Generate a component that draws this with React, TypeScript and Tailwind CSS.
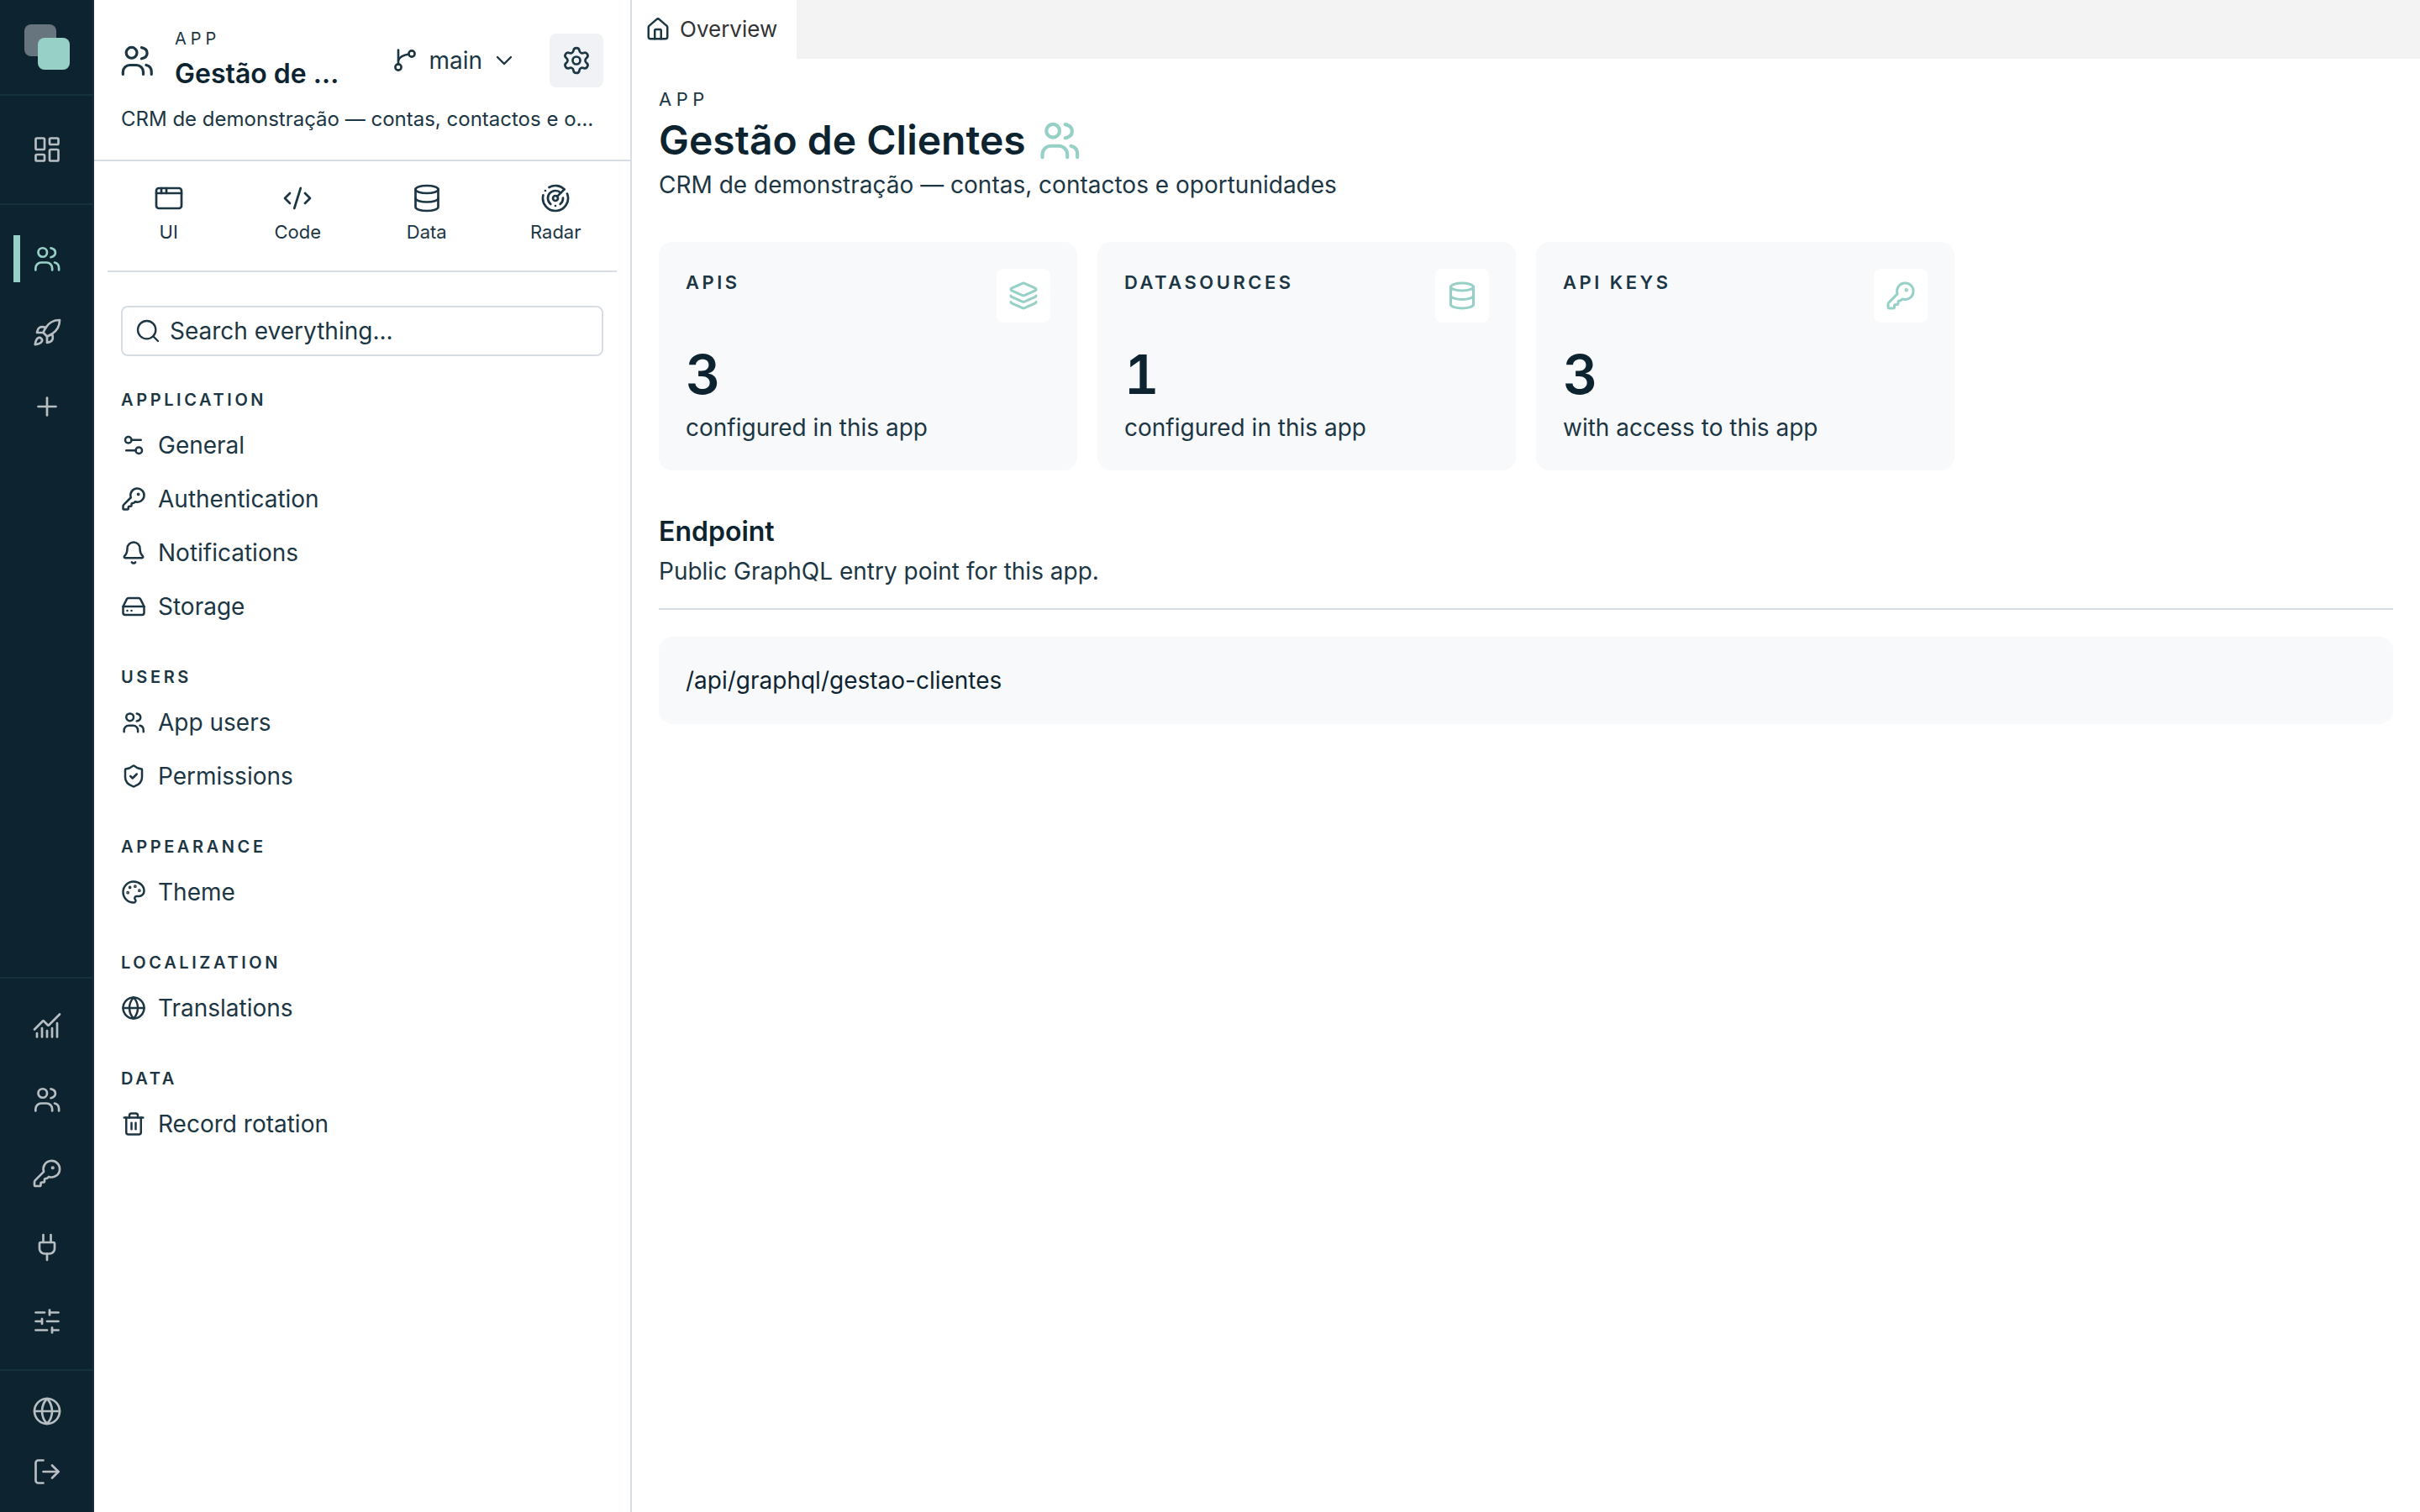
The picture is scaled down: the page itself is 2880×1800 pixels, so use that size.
import React from "react";
import {
  AppWindow,
  Bell,
  ChartNoAxesCombined,
  ChevronDown,
  CodeXml,
  Database,
  Globe,
  HardDrive,
  House,
  KeyRound,
  Layers,
  LayoutDashboard,
  LogOut,
  LucideIcon,
  LucideProps,
  Palette,
  Plug,
  Plus,
  Radar,
  Rocket,
  Search,
  Settings,
  Settings2,
  ShieldCheck,
  SlidersHorizontal,
  Trash2,
} from "lucide-react";

type IconType = LucideIcon | React.FC<LucideProps>;

// the app icon: lucide's Users is too slanted, this one has a round arch body
function AppUsers({ size = 24, strokeWidth = 2, className }: LucideProps) {
  return (
    <svg
      width={size}
      height={size}
      viewBox="0 0 24 24"
      fill="none"
      stroke="currentColor"
      strokeWidth={strokeWidth}
      strokeLinecap="round"
      strokeLinejoin="round"
      className={className}
    >
      <circle cx="8.5" cy="7" r="3.5" />
      <path d="M15 3.6c2.4.5 3.6 2 3.6 3.6s-1.2 3.1-3.6 3.6" />
      <path d="M2.9 21v-1.5a4.5 4.5 0 0 1 4.5-4.5h4.2a4.5 4.5 0 0 1 4.5 4.5V21" />
      <path d="M18 15c2.2.5 3.4 2.2 3.4 4.3V21" />
    </svg>
  );
}

function BranchIcon() {
  return (
    <svg
      width="28"
      height="28"
      viewBox="0 0 28 28"
      fill="none"
      stroke="currentColor"
      strokeWidth="2.6"
      strokeLinecap="round"
    >
      <circle cx="6" cy="22" r="3.6" />
      <circle cx="22" cy="6" r="3.6" />
      <path d="M6 18.4V1.5" />
      <path d="M18.4 6.5C12.5 7.5 7.5 9.5 6 14" />
    </svg>
  );
}

function RailItem({
  icon: Icon,
  active,
  className = "h-[88px]",
}: {
  icon: IconType;
  active?: boolean;
  className?: string;
}) {
  return (
    <div
      className={`relative flex items-center justify-center pl-[2px] ${className}`}
    >
      {active && (
        <span className="absolute left-4 top-4 h-14 w-2 bg-[#96d0c6]" />
      )}
      <Icon
        size={36}
        strokeWidth={1.8}
        className={active ? "text-[#96d0c6]" : "text-[#b7bec2]"}
      />
    </div>
  );
}

function Rail() {
  return (
    <aside className="flex h-full w-[112px] shrink-0 flex-col border-r-2 border-[#16303e] bg-[#0d2430]">
      <div className="relative h-[114px] shrink-0 border-b-2 border-[#16303e]">
        <span className="absolute left-[29px] top-[29px] h-[38px] w-[38px] rounded-lg bg-[#67757e]" />
        <span className="absolute left-[45px] top-[45px] h-[38px] w-[38px] rounded-lg bg-[#96d0c6]" />
      </div>
      <div className="h-[130px] shrink-0 border-b-2 border-[#16303e] pt-[20px]">
        <RailItem icon={LayoutDashboard} />
      </div>
      <div className="flex-1 pt-[20px]">
        <RailItem icon={AppUsers} active />
        <RailItem icon={Rocket} />
        <RailItem icon={Plus} />
      </div>
      <div className="h-[467px] shrink-0 border-t-2 border-[#16303e] pt-[12px]">
        <RailItem icon={ChartNoAxesCombined} />
        <RailItem icon={AppUsers} />
        <RailItem icon={KeyRound} />
        <RailItem icon={Plug} />
        <RailItem icon={SlidersHorizontal} />
      </div>
      <div className="h-[170px] shrink-0 border-t-2 border-[#16303e] pt-[12px]">
        <RailItem icon={Globe} className="h-[72px]" />
        <RailItem icon={LogOut} className="h-[72px]" />
      </div>
    </aside>
  );
}

const TOOLS: { icon: IconType; label: string }[] = [
  { icon: AppWindow, label: "UI" },
  { icon: CodeXml, label: "Code" },
  { icon: Database, label: "Data" },
  { icon: Radar, label: "Radar" },
];

const NAV: {
  title: string;
  items: { icon: IconType; label: string }[];
}[] = [
  {
    title: "APPLICATION",
    items: [
      { icon: Settings2, label: "General" },
      { icon: KeyRound, label: "Authentication" },
      { icon: Bell, label: "Notifications" },
      { icon: HardDrive, label: "Storage" },
    ],
  },
  {
    title: "USERS",
    items: [
      { icon: AppUsers, label: "App users" },
      { icon: ShieldCheck, label: "Permissions" },
    ],
  },
  {
    title: "APPEARANCE",
    items: [{ icon: Palette, label: "Theme" }],
  },
  {
    title: "LOCALIZATION",
    items: [{ icon: Globe, label: "Translations" }],
  },
  {
    title: "DATA",
    items: [{ icon: Trash2, label: "Record rotation" }],
  },
];

function Sidebar() {
  return (
    <aside className="flex h-full w-[640px] shrink-0 flex-col border-r-2 border-[#d8dde3] text-[#1c3644]">
      <div className="h-[192px] shrink-0 border-b-2 border-[#d8dde3] px-8 pt-[30px]">
        <div className="flex h-[84px] items-center">
          <AppUsers
            size={44}
            strokeWidth={1.75}
            className="-ml-[3px] shrink-0"
          />
          <div className="ml-[23px] w-[200px]">
            <div className="text-[20px] leading-[24px] tracking-[0.25em]">
              APP
            </div>
            <div className="mt-2 truncate text-[32px] leading-[44px] font-semibold text-[#0d2430]">
              Gestão de Clientes
            </div>
          </div>
          <div className="ml-auto flex items-center">
            <BranchIcon />
            <span className="ml-[14px] text-[28px] leading-9">main</span>
            <ChevronDown size={32} strokeWidth={1.8} className="ml-[10px]" />
          </div>
          <div className="ml-[38px] flex h-16 w-16 shrink-0 items-center justify-center rounded-lg bg-[#f0f2f5]">
            <Settings size={36} strokeWidth={1.8} />
          </div>
        </div>
        <div className="mt-[10px] truncate text-[24px] leading-9">
          CRM de demonstração — contas, contactos e oportunidades
        </div>
      </div>
      <div className="mx-4 h-[132px] shrink-0 border-b-2 border-[#d8dde3] pt-[26px]">
        <div className="-mx-[4px] grid grid-cols-4">
          {TOOLS.map(({ icon: Icon, label }) => (
            <div key={label} className="flex flex-col items-center">
              <Icon size={36} strokeWidth={1.8} />
              <span className="mt-[6px] text-[22px] leading-8">{label}</span>
            </div>
          ))}
        </div>
      </div>
      <div className="px-8 pt-10">
        <div className="flex h-[60px] items-center rounded-lg border-2 border-[#d8dde3] pl-[14px]">
          <Search size={32} strokeWidth={1.75} />
          <span className="ml-[10px] text-[28px] leading-9">
            Search everything...
          </span>
        </div>
        <nav className="mt-[36px] flex flex-col gap-[36px]">
          {NAV.map((group) => (
            <div key={group.title}>
              <div className="flex h-8 items-center text-[20px] font-semibold tracking-[3.6px]">
                {group.title}
              </div>
              <div className="mt-[6px]">
                {group.items.map(({ icon: Icon, label }) => (
                  <div key={label} className="flex h-16 items-center">
                    <Icon size={30} strokeWidth={2} className="shrink-0" />
                    <span className="ml-[14px] text-[28px] leading-9">
                      {label}
                    </span>
                  </div>
                ))}
              </div>
            </div>
          ))}
        </nav>
      </div>
    </aside>
  );
}

const STATS: {
  title: string;
  value: string;
  note: string;
  icon: IconType;
}[] = [
  { title: "APIS", value: "3", note: "configured in this app", icon: Layers },
  {
    title: "DATASOURCES",
    value: "1",
    note: "configured in this app",
    icon: Database,
  },
  {
    title: "API KEYS",
    value: "3",
    note: "with access to this app",
    icon: KeyRound,
  },
];

function StatCard({ title, value, note, icon: Icon }: (typeof STATS)[number]) {
  return (
    <div className="relative h-[272px] rounded-2xl bg-[#f8f9fb] p-8 text-[#1c3644]">
      <div className="text-[22px] leading-8 font-semibold tracking-[3.5px]">
        {title}
      </div>
      <div className="mt-[55px] text-[64px] leading-[78px] font-semibold text-[#0d2430] tabular-nums">
        {value}
      </div>
      <div className="mt-[6px] text-[28px] leading-9">{note}</div>
      <div className="absolute right-8 top-8 flex h-16 w-16 items-center justify-center rounded-lg bg-white">
        <Icon size={36} strokeWidth={2} className="text-[#96d0c6]" />
      </div>
    </div>
  );
}

function Main() {
  return (
    <main className="flex h-full min-w-0 flex-1 flex-col">
      <div className="flex h-[70px] shrink-0 bg-[#f3f3f3]">
        <div className="flex w-[196px] items-center bg-white pl-[16px]">
          <House size={30} strokeWidth={2} className="text-[#1c3644]" />
          <span className="ml-[11px] text-[26px] leading-8 text-[#333333]">
            Overview
          </span>
        </div>
      </div>
      <div className="px-8 pt-[33px] text-[#1c3644]">
        <div className="text-[22px] leading-[31px] tracking-[0.25em]">APP</div>
        <div className="flex h-[66px] items-center">
          <h1 className="text-[48px] leading-[66px] font-semibold text-[#0d2430]">
            Gestão de Clientes
          </h1>
          <AppUsers
            size={54}
            strokeWidth={1.85}
            className="ml-[13px] text-[#96d0c6]"
          />
        </div>
        <p className="text-[28px] leading-10">
          CRM de demonstração — contas, contactos e oportunidades
        </p>
        <div className="mt-[48px] grid w-[1542px] grid-cols-3 gap-6">
          {STATS.map((stat) => (
            <StatCard key={stat.title} {...stat} />
          ))}
        </div>
        <h2 className="mt-[50px] text-[32px] leading-[46px] font-semibold text-[#0d2430]">
          Endpoint
        </h2>
        <p className="mt-[4px] text-[28px] leading-10">
          Public GraphQL entry point for this app.
        </p>
        <div className="mt-[24px] h-[2px] bg-[#d8dde3]" />
        <div className="mt-[32px] flex h-[104px] items-center rounded-2xl bg-[#f8f9fb] px-8 text-[28px] text-[#0d2430]">
          /api/graphql/gestao-clientes
        </div>
      </div>
    </main>
  );
}

export default function App() {
  return (
    <div className="flex h-screen w-full overflow-hidden bg-white font-[Inter,sans-serif]">
      <Rail />
      <Sidebar />
      <Main />
    </div>
  );
}
